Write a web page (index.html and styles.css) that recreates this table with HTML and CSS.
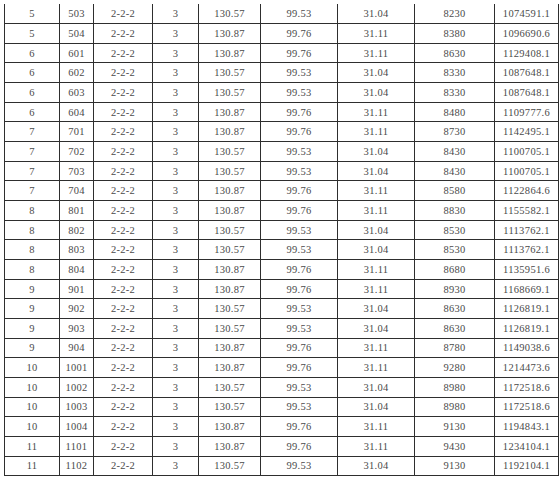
FILE: index.html
```html
<!DOCTYPE html>
<html>
<head>
<meta charset="utf-8">
<link rel="stylesheet" href="styles.css">
</head>
<body>
<div class="page">
<table class="grid">
<colgroup>
<col class="c1"><col class="c2"><col class="c3"><col class="c4"><col class="c5"><col class="c6"><col class="c7"><col class="c8"><col class="c9">
</colgroup>
<tbody>
<tr><td>5</td><td>503</td><td>2-2-2</td><td>3</td><td>130.57</td><td>99.53</td><td>31.04</td><td>8230</td><td>1074591.1</td></tr>
<tr><td>5</td><td>504</td><td>2-2-2</td><td>3</td><td>130.87</td><td>99.76</td><td>31.11</td><td>8380</td><td>1096690.6</td></tr>
<tr><td>6</td><td>601</td><td>2-2-2</td><td>3</td><td>130.87</td><td>99.76</td><td>31.11</td><td>8630</td><td>1129408.1</td></tr>
<tr><td>6</td><td>602</td><td>2-2-2</td><td>3</td><td>130.57</td><td>99.53</td><td>31.04</td><td>8330</td><td>1087648.1</td></tr>
<tr><td>6</td><td>603</td><td>2-2-2</td><td>3</td><td>130.57</td><td>99.53</td><td>31.04</td><td>8330</td><td>1087648.1</td></tr>
<tr><td>6</td><td>604</td><td>2-2-2</td><td>3</td><td>130.87</td><td>99.76</td><td>31.11</td><td>8480</td><td>1109777.6</td></tr>
<tr><td>7</td><td>701</td><td>2-2-2</td><td>3</td><td>130.87</td><td>99.76</td><td>31.11</td><td>8730</td><td>1142495.1</td></tr>
<tr><td>7</td><td>702</td><td>2-2-2</td><td>3</td><td>130.57</td><td>99.53</td><td>31.04</td><td>8430</td><td>1100705.1</td></tr>
<tr><td>7</td><td>703</td><td>2-2-2</td><td>3</td><td>130.57</td><td>99.53</td><td>31.04</td><td>8430</td><td>1100705.1</td></tr>
<tr><td>7</td><td>704</td><td>2-2-2</td><td>3</td><td>130.87</td><td>99.76</td><td>31.11</td><td>8580</td><td>1122864.6</td></tr>
<tr><td>8</td><td>801</td><td>2-2-2</td><td>3</td><td>130.87</td><td>99.76</td><td>31.11</td><td>8830</td><td>1155582.1</td></tr>
<tr><td>8</td><td>802</td><td>2-2-2</td><td>3</td><td>130.57</td><td>99.53</td><td>31.04</td><td>8530</td><td>1113762.1</td></tr>
<tr><td>8</td><td>803</td><td>2-2-2</td><td>3</td><td>130.57</td><td>99.53</td><td>31.04</td><td>8530</td><td>1113762.1</td></tr>
<tr><td>8</td><td>804</td><td>2-2-2</td><td>3</td><td>130.87</td><td>99.76</td><td>31.11</td><td>8680</td><td>1135951.6</td></tr>
<tr><td>9</td><td>901</td><td>2-2-2</td><td>3</td><td>130.87</td><td>99.76</td><td>31.11</td><td>8930</td><td>1168669.1</td></tr>
<tr><td>9</td><td>902</td><td>2-2-2</td><td>3</td><td>130.57</td><td>99.53</td><td>31.04</td><td>8630</td><td>1126819.1</td></tr>
<tr><td>9</td><td>903</td><td>2-2-2</td><td>3</td><td>130.57</td><td>99.53</td><td>31.04</td><td>8630</td><td>1126819.1</td></tr>
<tr><td>9</td><td>904</td><td>2-2-2</td><td>3</td><td>130.87</td><td>99.76</td><td>31.11</td><td>8780</td><td>1149038.6</td></tr>
<tr><td>10</td><td>1001</td><td>2-2-2</td><td>3</td><td>130.87</td><td>99.76</td><td>31.11</td><td>9280</td><td>1214473.6</td></tr>
<tr><td>10</td><td>1002</td><td>2-2-2</td><td>3</td><td>130.57</td><td>99.53</td><td>31.04</td><td>8980</td><td>1172518.6</td></tr>
<tr><td>10</td><td>1003</td><td>2-2-2</td><td>3</td><td>130.57</td><td>99.53</td><td>31.04</td><td>8980</td><td>1172518.6</td></tr>
<tr><td>10</td><td>1004</td><td>2-2-2</td><td>3</td><td>130.87</td><td>99.76</td><td>31.11</td><td>9130</td><td>1194843.1</td></tr>
<tr><td>11</td><td>1101</td><td>2-2-2</td><td>3</td><td>130.87</td><td>99.76</td><td>31.11</td><td>9430</td><td>1234104.1</td></tr>
<tr><td>11</td><td>1102</td><td>2-2-2</td><td>3</td><td>130.57</td><td>99.53</td><td>31.04</td><td>9130</td><td>1192104.1</td></tr>
</tbody>
</table>
</div>
</body>
</html>
```
FILE: styles.css
```css
html, body {
  margin: 0;
  padding: 0;
  background: #fff;
}
.page {
  padding: 4px 0 0 4px;
}
.grid {
  border-collapse: collapse;
  table-layout: fixed;
  width: 554px;
  font-family: "Liberation Serif", "Noto Sans CJK SC", serif;
  font-size: 10.5px;
  letter-spacing: 0.3px;
  color: #4a4a4a;
}
.grid tr {
  height: 19.67px;
}
.grid td {
  border: 1px solid #2e2e2e;
  padding: 0;
  text-align: center;
  vertical-align: middle;
  white-space: nowrap;
  overflow: hidden;
}
.grid tr:first-child td {
  border-top: none;
}
.c1 { width: 55px; }
.c2 { width: 34px; }
.c3 { width: 59px; }
.c4 { width: 46px; }
.c5 { width: 62px; }
.c6 { width: 77px; }
.c7 { width: 77px; }
.c8 { width: 80px; }
.c9 { width: 64px; }
```
